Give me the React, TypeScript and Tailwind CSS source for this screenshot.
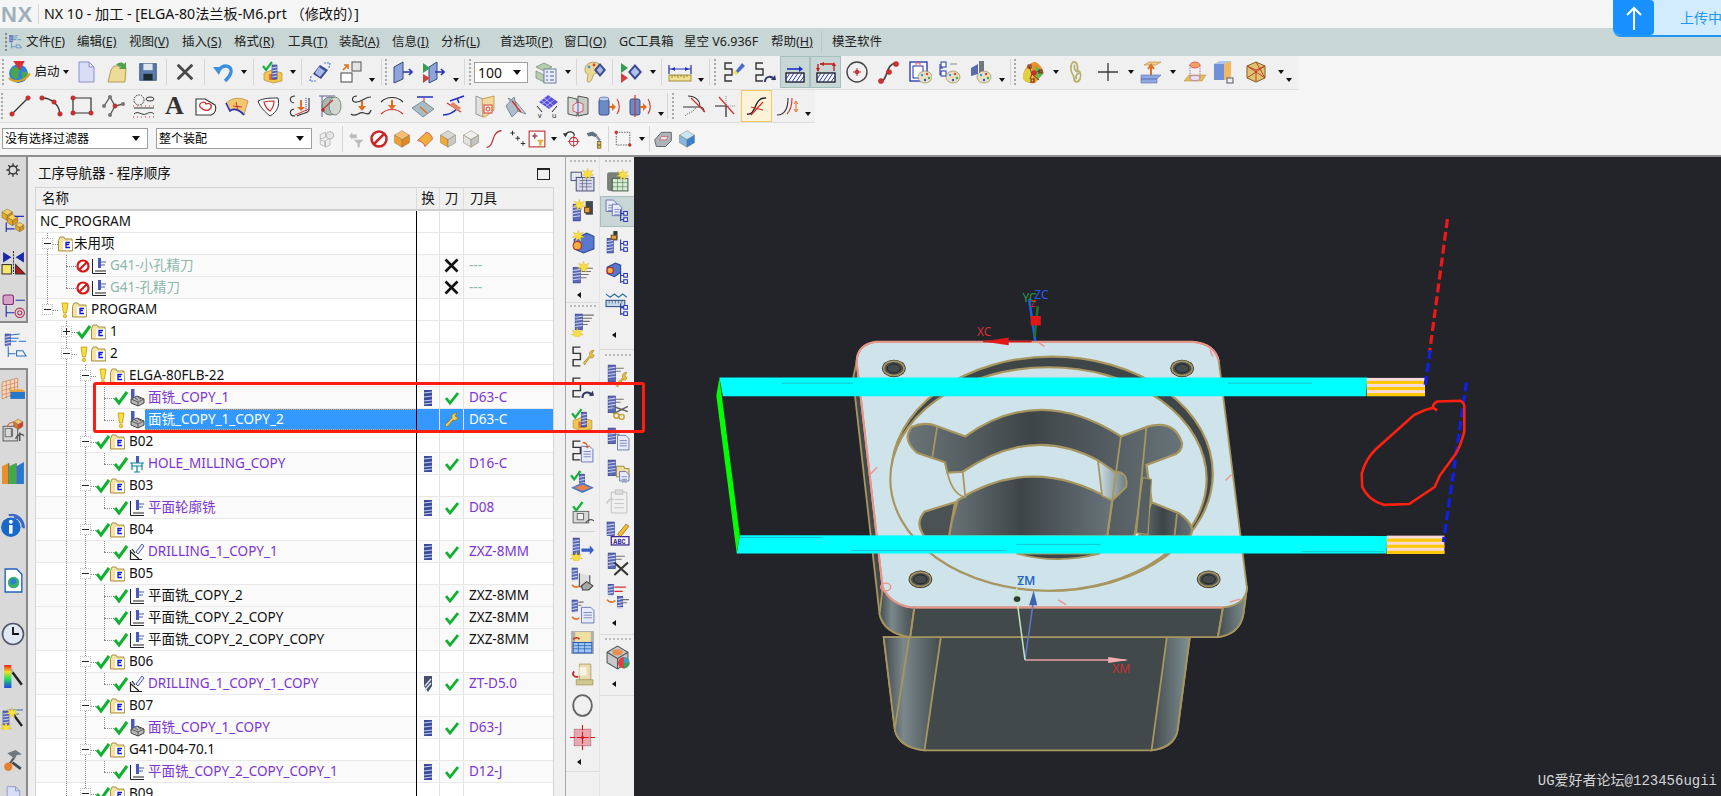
import React from "react";

const FONT = "font-['Noto_Sans','Noto_Sans_CJK_SC',sans-serif]";

// ---- small drawing helpers for the toolbar icons ----
const mill = (x: number, y: number, h = 16, w = 7) => (
  <g>
    <rect x={x} y={y} width={w} height={h} fill="#5a68b8" stroke="#2d3a85" strokeWidth=".6" />
    <path d={`M${x} ${y + 3}l${w} -1M${x} ${y + 6}l${w} -1M${x} ${y + 9}l${w} -1M${x} ${y + 12}l${w} -1`} stroke="#cdd4f2" strokeWidth="1" />
  </g>
);
const snake = <path d="M10 3H3v6h7v6H3v6h7" fill="none" stroke="#333" strokeWidth="1.4" />;
const palette = (x: number, y: number) => (
  <g>
    <ellipse cx={x} cy={y} rx="7" ry="6" fill="#eadfc0" stroke="#8a7a50" strokeWidth=".6" />
    <circle cx={x - 3} cy={y - 2} r="1.2" fill="#2aa0e0" />
    <circle cx={x + 2} cy={y - 3} r="1.2" fill="#e04030" />
    <circle cx={x + 4} cy={y + 1} r="1.2" fill="#30b040" />
    <circle cx={x} cy={y + 3} r="1.2" fill="#3050d0" />
  </g>
);
const redDot = (x: number, y: number, r = 1.9) => <circle cx={x} cy={y} r={r} fill="#d03030" stroke="#902020" strokeWidth=".4" />;
const greenCheck = (x: number, y: number) => (
  <path d={`M${x} ${y + 3}l3 4l6 -8`} fill="none" stroke="#18b040" strokeWidth="2.2" />
);
const treeMark = (x: number, y: number) => (
  <path d={`M${x} ${y}v11M${x} ${y + 4}h3M${x} ${y + 10}h3`} stroke="#2030b0" strokeWidth="1" fill="none" />
);
const treeBoxes = (x: number, y: number) => (
  <g fill="#fff" stroke="#2030b0" strokeWidth="1">
    {treeMark(x, y)}
    <rect x={x + 3} y={y + 2} width="3.5" height="3.5" />
    <rect x={x + 3} y={y + 8} width="3.5" height="3.5" />
  </g>
);
const doc = (x: number, y: number, w = 10, h = 13) => (
  <g>
    <path d={`M${x} ${y}h${w - 3}l3 3v${h - 3}h-${w}z`} fill="#e8ecfa" stroke="#5a68a8" strokeWidth=".8" />
    <path d={`M${x + 2} ${y + 5}h${w - 4}M${x + 2} ${y + 7.5}h${w - 4}M${x + 2} ${y + 10}h${w - 4}`} stroke="#5a68a8" strokeWidth=".7" />
  </g>
);
const cube = (x: number, y: number, s: number, top: string, left: string, right: string) => (
  <g stroke="#7a6a40" strokeWidth=".5">
    <path d={`M${x} ${y + s * 0.3}L${x + s / 2} ${y}L${x + s} ${y + s * 0.3}L${x + s / 2} ${y + s * 0.6}z`} fill={top} />
    <path d={`M${x} ${y + s * 0.3}L${x + s / 2} ${y + s * 0.6}V${y + s * 1.1}L${x} ${y + s * 0.8}z`} fill={left} />
    <path d={`M${x + s} ${y + s * 0.3}L${x + s / 2} ${y + s * 0.6}V${y + s * 1.1}L${x + s} ${y + s * 0.8}z`} fill={right} />
  </g>
);
const star = (x: number, y: number) => (
  <path d={`M${x} ${y - 5}l1.2 3.6l3.8 -1.4l-2 3l3 1.6l-3.8 .4l.4 3.8l-2.6 -3l-2.6 3l.4 -3.8l-3.8 -.4l3 -1.6l-2 -3l3.8 1.4z`} fill="#f8e040" stroke="#c8a020" strokeWidth=".3" />
);
const hatch = (
  <>
    <rect x="3" y="13" width="18" height="9" fill="#fff" stroke="#000" strokeWidth="1.2" />
    <path d="M5 22l6-9M9 22l6-9M13 22l6-9M17 22l4-6M3 19l4-6" stroke="#2030c0" strokeWidth="1" />
  </>
);

const ICONS: Record<string, React.ReactNode> = {
  earth: (
    <>
      <circle cx="11" cy="13" r="9" fill="#2f80d8" />
      <path d="M5 8c3-2 6-1 7 1s-2 3-1 6s-3 4-5 2s-3-6-1-9zM14 12c2-1 5-1 6 1c-1 3-3 5-5 5c-1-2 0-4-1-6z" fill="#48a848" />
      <path d="M2 17c5 6 16 3 20-4" fill="none" stroke="#d8a020" strokeWidth="2" />
      <path d="M6 1h11l-5 9z" fill="#d83030" />
    </>
  ),
  doc: <path d="M5 2h10l5 5v15H5zM15 2v5h5" fill="#d8def6" stroke="#8a90c8" strokeWidth="1" />,
  folder: (
    <>
      <path d="M5 10l3-4h5l1 2h6l-1 14H2z" fill="#ecdc98" stroke="#b09c58" />
      <path d="M10 5c3-3 6-3 8-1l2-2v7h-7l2-2c-1-1-3-1-5-2z" fill="#50a050" />
    </>
  ),
  save: (
    <>
      <rect x="3" y="3" width="18" height="18" fill="#5a7ca8" stroke="#3a5478" />
      <rect x="7" y="3" width="10" height="7" fill="#dfe6f0" />
      <rect x="7" y="14" width="10" height="7" fill="#1e2830" />
    </>
  ),
  xmark: <path d="M4 4l16 16M20 4L4 20" stroke="#484848" strokeWidth="3" />,
  undo: (
    <>
      <path d="M8 10c4-6 13-5 12 2c-1 5-4 7-6 9" fill="none" stroke="#3c8fe0" strokeWidth="3.4" />
      <path d="M2 7l9 0l-3 8z" fill="#3c8fe0" />
    </>
  ),
  camCheck: (
    <>
      <path d="M3 13l8-3l10 3v8l-9 2l-9-3z" fill="#f0c850" stroke="#b08020" strokeWidth=".6" />
      <path d="M8 14l7 0v6l-7 0z" fill="#e07040" />
      {mill(11, 5, 14, 5)}
      {greenCheck(2, 3)}
    </>
  ),
  mirror: (
    <>
      <path d="M12 5l8 5l-7 9l-8-5z" fill="#3a4a90" />
      <path d="M11 7l6 4l-5 6l-5-4z" fill="#a8b8e8" />
      <path d="M16 3l6 0l-1 5M8 21l-6 0l1-5" fill="none" stroke="#4878d8" strokeWidth="1.2" strokeDasharray="2 1" />
    </>
  ),
  squares: (
    <>
      <rect x="13" y="2" width="9" height="9" fill="#e4e4e4" stroke="#555" />
      <rect x="2" y="13" width="11" height="9" fill="#fff" stroke="#444" />
      <path d="M4 10l5-5M5 5h4v4" fill="none" stroke="#e07020" strokeWidth="1.6" />
    </>
  ),
  box1: (
    <>
      <path d="M4 7l9-5v17l-9 4z" fill="#8ea4da" stroke="#3a4a7a" />
      <path d="M13 12h9M19 9l3 3l-3 3" fill="none" stroke="#2030c0" strokeWidth="1.6" />
    </>
  ),
  box2: (
    <>
      <path d="M8 7l8-5v17l-8 4z" fill="#8ea4da" stroke="#3a4a7a" />
      <path d="M2 3l7 5l-7 5z" fill="#30a050" />
      <path d="M2 14l7 4l-7 5z" fill="#d04040" />
      <path d="M14 12h9M20 9l3 3l-3 3" fill="none" stroke="#2030c0" strokeWidth="1.6" />
    </>
  ),
  stack: (
    <>
      <path d="M2 7l8-4l8 4l-8 4zM2 11l8 4v7l-8-4z" fill="#b8ccb0" stroke="#708870" strokeWidth=".7" />
      <rect x="10" y="9" width="12" height="14" fill="#e8ecf8" stroke="#7080a0" />
      <path d="M12 12h2M16 12h4M12 16h2M16 16h4M12 20h2M16 20h4" stroke="#506090" strokeWidth="1.2" />
    </>
  ),
  paletteD: (
    <>
      <path d="M2 9c0-6 9-9 14-5l-2 9c-2 1-3 0-4 3c-1 4-3 7-5 6c-2-1 0-5 0-7c0-2-3 0-3-6z" fill="#ecd890" stroke="#a08850" strokeWidth=".7" />
      <circle cx="6" cy="7" r="1.4" fill="#2aa0e0" />
      <circle cx="11" cy="5" r="1.4" fill="#e04030" />
      <path d="M17 3l6 7l-6 7l-6-7z" fill="#3a4a90" />
      <path d="M17 6l3.4 4L17 14l-3.4-4z" fill="#a8b8e8" />
    </>
  ),
  flagD: (
    <>
      <path d="M2 3l7 5l-7 5z" fill="#30a050" />
      <path d="M2 13l7 5l-7 5z" fill="#d04040" />
      <path d="M16 4l7 8l-7 8l-7-8z" fill="#3a4a90" />
      <path d="M16 7l4.4 5l-4.4 5l-4.4-5z" fill="#b0c0ec" />
    </>
  ),
  ruler: (
    <>
      <path d="M1 5v9M23 5v9M1 9h22" stroke="#2030c0" strokeWidth="1.2" />
      <path d="M3 9l4-2v4zM21 9l-4-2v4z" fill="#2030c0" />
      <rect x="1" y="15" width="22" height="6" fill="#f0e090" stroke="#a09040" />
      <path d="M4 15v3M7 15v2M10 15v3M13 15v2M16 15v3M19 15v2" stroke="#706020" strokeWidth=".7" />
    </>
  ),
  snakeL: (
    <>
      {snake}
      <path d="M13 12l7-9l3 3l-8 8z" fill="#4a6ac8" />
      <path d="M13 10l3 3l-2 2l-3-2z" fill="#f0e060" />
    </>
  ),
  snakeC: (
    <>
      {snake}
      <path d="M12 22c0-6 7-7 9-2" fill="none" stroke="#303868" strokeWidth="2" />
      <path d="M18 20h5l-1-5z" fill="#303868" />
    </>
  ),
  activeA: (
    <>
      <path d="M4 9h14" stroke="#2030c0" strokeWidth="1.6" />
      <path d="M20 9l-4-3v6z" fill="#2030c0" />
      {hatch}
    </>
  ),
  activeB: (
    <>
      <path d="M6 4h14M4 4v7M20 4v7" stroke="#c02020" strokeWidth="1.4" />
      <path d="M4 12l-2-4h4zM20 2l2 4h-4zM6 4l4-2v4z" fill="#c02020" />
      {hatch}
    </>
  ),
  circlePt: (
    <>
      <circle cx="12" cy="12" r="10" fill="none" stroke="#444" strokeWidth="1.4" />
      <path d="M12 8v8M8 12h8" stroke="#d03030" strokeWidth="1" />
      {redDot(12, 12, 2)}
    </>
  ),
  sCurve: (
    <>
      <path d="M4 21c7 0 4-17 15-18" fill="none" stroke="#444" strokeWidth="1.6" />
      {redDot(4, 21, 2.6)}
      {redDot(12, 12, 2.6)}
      {redDot(19, 4, 2.6)}
    </>
  ),
  sqPalette: (
    <>
      <rect x="2" y="2" width="17" height="19" fill="#fff" stroke="#2030b0" strokeWidth="1.3" />
      <rect x="5" y="6" width="10" height="12" fill="none" stroke="#2030b0" />
      <path d="M8 6V3h4v3" fill="none" stroke="#e06050" />
      {palette(17, 17)}
    </>
  ),
  treePalette: (
    <>
      {treeMark(3, 4)}
      <rect x="4" y="2" width="5" height="5" fill="#fff" stroke="#2030b0" />
      <rect x="4" y="11" width="5" height="5" fill="#fff" stroke="#2030b0" />
      <path d="M13 4h7" stroke="#888" />
      {palette(16, 17)}
    </>
  ),
  millPalette: (
    <>
      <path d="M3 8l7-4l0 10l-7 2z" fill="#5a6ab0" />
      <rect x="11" y="1" width="5" height="12" fill="#707880" />
      {palette(16, 17)}
    </>
  ),
  rainbow: (
    <>
      <path d="M2 17C2 9 9 2 14 2c5 1 8 8 9 11l-9 10c-5 1-12-1-12-6z" fill="#e89030" />
      <path d="M2 17c0-5 4-9 7-12c2 5 4 10 3 17c-5 1-10-1-10-5z" fill="#e0d040" />
      <path d="M14 6c4 2 7 5 8 8l-6 6c0-5-1-10-2-14z" fill="#50c050" />
      <path d="M8 6l3 8l-2 5M11 14l7-3l2 1M11 14l7 6" fill="none" stroke="#803030" />
      <rect x="7" y="5" width="3" height="3" fill="none" stroke="#702020" />
      <rect x="18" y="10" width="3" height="3" fill="none" stroke="#702020" />
      <rect x="10" y="19" width="3" height="3" fill="none" stroke="#702020" />
      {redDot(13, 13, 2.4)}
    </>
  ),
  chain: <path d="M9 2c4 0 4 7 3 10c2-3 5 2 3 7c-2 4-6 4-6-1c0-4-4-5-3-10c0-3 1-6 3-6zM10 5c-2 2 0 6 2 7M14 13c-3 1-4 5-2 6" fill="none" stroke="#b8b070" strokeWidth="1.8" />,
  plus: <path d="M12 3v18M2 12h20" stroke="#383838" strokeWidth="1.3" />,
  lift: (
    <>
      <path d="M5 5l5-3h12l-5 3z" fill="#f0c880" stroke="#b08840" strokeWidth=".6" />
      <path d="M12 6v9M9 9l3-4l3 4" fill="none" stroke="#e07020" strokeWidth="2" />
      <path d="M2 15h20l-4 4H2zM2 19h16v4H2z" fill="#90a8e0" stroke="#5870b0" strokeWidth=".6" />
    </>
  ),
  cylPlate: (
    <>
      <path d="M1 21l5-6h17l-4 6z" fill="#e8c050" stroke="#a88830" strokeWidth=".5" />
      <path d="M7 5v13c0 2 10 2 10 0V5" fill="none" stroke="#b070c0" strokeDasharray="1.5 1" />
      <ellipse cx="12" cy="5" rx="5" ry="3" fill="#f0a060" stroke="#d04040" strokeWidth=".7" />
      <ellipse cx="12" cy="18" rx="5" ry="2.5" fill="#e8e0f0" stroke="#b070c0" strokeWidth=".7" />
    </>
  ),
  blueBox: (
    <>
      <path d="M3 4l6-3h11v16l-6 3H3z" fill="#f0b860" />
      <path d="M3 4h10v16H3z" fill="#7090d8" />
      <path d="M3 4l6-3h11l-7 3z" fill="#b0c8f0" />
      <rect x="16" y="18" width="6" height="5" fill="#f0f0f0" stroke="#556" />
    </>
  ),
  wireBox: (
    <>
      <path d="M3 6l9-4l9 4v12l-9 4l-9-4z" fill="#e0c470" stroke="#806020" />
      <path d="M3 6l9 4l9-4M12 10v12M3 6l18 12M21 6L3 18M12 2l9 16" fill="none" stroke="#c04030" strokeWidth="1" />
    </>
  ),
  line: (
    <>
      <path d="M4 20L20 4" stroke="#333" strokeWidth="1.2" />
      {redDot(4, 20, 2.3)}
      {redDot(20, 4, 2.3)}
    </>
  ),
  arc: (
    <>
      <path d="M3 4c9 0 18 6 18 18" fill="none" stroke="#333" strokeWidth="1.4" />
      {redDot(3, 4, 2.3)}
      {redDot(15, 8, 2.3)}
      {redDot(21, 20, 2.3)}
    </>
  ),
  rect: (
    <>
      <path d="M3 4h18v15H3z" fill="none" stroke="#333" strokeWidth="1.2" />
      {redDot(3, 4, 2.3)}
      {redDot(3, 19, 2.3)}
      {redDot(21, 19, 2.3)}
    </>
  ),
  poly: (
    <>
      <path d="M3 12L9 3l5 9l-5 9l5-9l8-2" fill="none" stroke="#555" strokeWidth="1.3" />
      <circle cx="9" cy="3" r="2" fill="#777" />
      <circle cx="3" cy="12" r="2" fill="#777" />
      {redDot(14, 12, 2.2)}
      <circle cx="9" cy="21" r="2" fill="#777" />
      <circle cx="22" cy="10" r="2" fill="#777" />
    </>
  ),
  sketchDots: (
    <>
      <circle cx="7" cy="6" r="5" fill="none" stroke="#333" strokeDasharray="1.5 1" />
      <ellipse cx="18" cy="5" rx="4" ry="2" fill="none" stroke="#333" />
      <path d="M2 14h20M2 20c4-4 8 2 12 0s6-2 8 0" fill="none" stroke="#333" />
      <path d="M1 12h22M1 23h22" stroke="#d03030" strokeDasharray="1 3" />
    </>
  ),
  heart: (
    <>
      <path d="M2 5h9l10 6c2 4 0 9-4 10H2z" fill="#fff" stroke="#333" strokeWidth="1.1" />
      <path d="M6 13c-2-5 5-6 6-3c4-2 7 2 4 5c-2 2-6 2-10-2z" fill="none" stroke="#d03030" strokeWidth="1.3" />
    </>
  ),
  patch: (
    <>
      <path d="M1 9c7-6 14-6 22-2l-4 14C14 15 8 14 5 17z" fill="#f0c870" stroke="#c08030" strokeWidth=".7" />
      <path d="M1 9l4 8c3-3 9-2 14 4" fill="none" stroke="#2030c0" strokeWidth="1.6" />
      <path d="M11 8l2 9M8 12l9 1" stroke="#d03030" strokeWidth="1" />
    </>
  ),
  patch2: (
    <>
      <path d="M2 7c6-3 13-3 20-3c2 8-1 14-8 18C9 18 4 13 2 7z" fill="#fff" stroke="#333" />
      <path d="M8 8c4-1 8-1 10-1c0 5-2 8-4 10C11 15 9 12 8 8z" fill="none" stroke="#d03030" strokeWidth="1.2" />
    </>
  ),
  curve1: (
    <>
      <path d="M8 2C2 2 2 8 7 9M8 22C2 22 2 16 7 15M22 4v12c0 3-6 3-12 6" fill="none" stroke="#333" strokeWidth="1.1" />
      <path d="M14 6v9" stroke="#e07020" strokeWidth="2" />
      <path d="M10 13h8l-4 4z" fill="#e07020" />
      <path d="M19 4v13" stroke="#2030c0" strokeDasharray="1 1" />
      <path d="M8 21l14-6" stroke="#d03030" />
    </>
  ),
  cylLine: (
    <>
      <path d="M1 2h16M4 2v21" stroke="#606090" />
      <ellipse cx="12" cy="12" rx="8" ry="9" fill="#a8b8b0" stroke="#6a7a70" />
      <ellipse cx="17" cy="12" rx="6" ry="9" fill="#d0d8d0" stroke="#7a8a80" />
      <path d="M4 16L15 6" stroke="#d03030" strokeWidth="1.2" />
      {redDot(5, 16, 1.5)}
    </>
  ),
  curves: (
    <>
      <path d="M8 2C2 2 2 9 8 8M22 3c-6 0-8 4-14 5M2 20c5 4 8-3 13-1s6 0 7-3" fill="none" stroke="#333" strokeWidth="1.2" />
      <path d="M13 7v7" stroke="#e07020" strokeWidth="2" />
      <path d="M9 12h8l-4 5z" fill="#e07020" />
    </>
  ),
  arch: (
    <>
      <path d="M1 8c6-6 16-6 22 0" fill="none" stroke="#333" strokeWidth="1.1" />
      <path d="M1 20c6-6 16-6 22 0" fill="none" stroke="#d03030" strokeWidth="1.2" />
      <path d="M12 6v7" stroke="#e07020" strokeWidth="2" />
      <path d="M8 11h8l-4 5z" fill="#e07020" />
    </>
  ),
  plane: (
    <>
      <path d="M6 3h16" stroke="#2030c0" strokeWidth="1.5" />
      <path d="M13 3v9" stroke="#d03030" />
      <path d="M1 14l11-7l11 8l-11 8z" fill="#a8bcc4" stroke="#607080" strokeWidth=".7" />
      <path d="M9 13l7 6" stroke="#e07020" strokeWidth="1.6" />
    </>
  ),
  crossBlue: (
    <>
      <path d="M8 7L22 2M15 4l2 5" stroke="#2030c0" strokeWidth="1.5" />
      <path d="M1 21c6 0 11-3 15-7" fill="none" stroke="#2030c0" strokeWidth="1.5" />
      <path d="M5 9l14 9" stroke="#d03030" strokeWidth="1.2" />
      <path d="M11 8l8 6l-3 3l-8-6z" fill="#e08860" />
    </>
  ),
  sheets: (
    <>
      <path d="M3 2l7 3v18l-7-3z" fill="#e0e0e0" stroke="#999" />
      <path d="M9 5l12-3v14l-9 7l-2 0z" fill="#f0d8a0" stroke="#c8a050" />
      <rect x="11" y="11" width="8" height="8" fill="#f4ecd8" stroke="#d04040" />
      <circle cx="15" cy="15" r="2" fill="none" stroke="#d04040" />
    </>
  ),
  fold: (
    <>
      <path d="M4 4l8 4l10 12l-8-3z" fill="#cfd8de" stroke="#7a8a98" />
      <path d="M2 12l8-9l4 14l-6 6z" fill="#b0bcc8" stroke="#7a8a98" />
      <path d="M8 7l9 11" stroke="#d03030" strokeWidth="1.3" />
    </>
  ),
  mesh: (
    <>
      <path d="M4 8l9-7l10 7l-9 7z" fill="#5a50d8" />
      <path d="M6 6l10 8M9 4l10 8M13 1l-9 7M16 3l-9 7M19 6l-9 7" stroke="#cfd0f8" strokeWidth=".7" />
      <path d="M2 12l5 6M22 12l-5 6" stroke="#222" />
      <text x="3" y="24" fontSize="7" fill="#222">v</text>
      <text x="17" y="24" fontSize="7" fill="#222">u</text>
    </>
  ),
  cubeSheets: (
    <>
      <path d="M2 3l9 2v17l-9-2z" fill="#d8dcd8" stroke="#555" />
      <path d="M12 2l10 2v16l-10 2z" fill="#c8ccc8" stroke="#555" />
      <path d="M7 11l5-3l5 2v7l-5 2l-5-2z" fill="#e8e0e8" stroke="#d04040" strokeWidth=".8" />
      <path d="M12 8v11" stroke="#2040c0" strokeWidth=".8" />
    </>
  ),
  cylA: (
    <>
      <rect x="2" y="5" width="10" height="16" rx="2" fill="#6a8ac8" stroke="#3a5090" />
      <ellipse cx="7" cy="5" rx="5" ry="2" fill="#c0d0ec" stroke="#3a5090" strokeWidth=".6" />
      <path d="M12 13h5" stroke="#e07020" strokeWidth="2" />
      <path d="M15 9l4 4l-4 4z" fill="#e07020" />
      <path d="M20 5c3 4 3 11 0 15" fill="none" stroke="#d03030" strokeWidth="1.1" />
    </>
  ),
  cylB: (
    <>
      <rect x="2" y="5" width="10" height="16" rx="2" fill="#6a8ac8" stroke="#3a5090" />
      <path d="M7 1v22" stroke="#d03030" strokeWidth="1.2" />
      <path d="M12 13h5" stroke="#e07020" strokeWidth="2" />
      <path d="M15 9l4 4l-4 4z" fill="#e07020" />
      <path d="M20 5c3 4 3 11 0 15" fill="none" stroke="#d03030" strokeWidth="1.1" />
    </>
  ),
  trim1: (
    <>
      <path d="M1 13h17c4 0 4 3 4 5" fill="none" stroke="#333" strokeWidth="1.1" />
      <path d="M6 2c7 0 12 4 12 11" fill="none" stroke="#333" strokeWidth="1.1" />
      <path d="M3 22c2-3 6-3 8-5s3-3 3-4" fill="none" stroke="#777" strokeDasharray="1.4 1" />
      <path d="M9 4l14 14" stroke="#d03030" strokeWidth="1.3" />
    </>
  ),
  trim2: (
    <>
      <path d="M1 12h12M12 12v11" stroke="#222" strokeWidth="1.2" />
      <path d="M12 2v10M12 12h9" stroke="#888" strokeDasharray="1 1" />
      <path d="M5 3l15 17" stroke="#d03030" strokeWidth="1.2" />
    </>
  ),
  trim3: (
    <>
      <path d="M2 20c10 2 6-17 19-16" fill="none" stroke="#222" strokeWidth="1.4" />
      <path d="M6 21L18 8M6 13l12 3" stroke="#d03030" strokeWidth="1.2" />
    </>
  ),
  trim4: (
    <>
      <path d="M2 21c7 0 11-6 11-17" fill="none" stroke="#333" strokeWidth="1.1" />
      <path d="M12 20c4-4 5-10 5-16" fill="none" stroke="#d03030" strokeWidth="1.1" />
      <path d="M21 8v9M19 10l2-3l2 3M19 15l2 3l2-3" fill="none" stroke="#e07020" strokeWidth="1" />
    </>
  ),
  grayCube: (
    <>
      <path d="M3 6l7-3v7l-7 2zM10 14l6-3v9l-6 3zM3 13l6 2v7l-6-3z" fill="#eee" stroke="#aaa" />
      <circle cx="16" cy="7" r="5" fill="#e4e4e4" stroke="#aaa" />
    </>
  ),
  grayFilter: (
    <>
      <path d="M3 8l4-5v3h6v5H7v2z" fill="#bbb" />
      <path d="M9 13h13l-5 5v5h-3v-5z" fill="#bbb" />
    </>
  ),
  no: (
    <>
      <circle cx="12" cy="12" r="9" fill="#fff" stroke="#c82828" strokeWidth="3" />
      <path d="M6 18L18 6" stroke="#c82828" strokeWidth="3" />
    </>
  ),
  orangeCube: cube(3, 2, 18, "#f8c070", "#f0a030", "#e08828"),
  orangePatch: <path d="M2 14L14 3c4 1 7 4 8 9L12 22c-1-4-5-7-10-8z" fill="#f0b040" stroke="#d03030" strokeWidth="1" />,
  cubeA: cube(3, 2, 18, "#d8d8d8", "#f0a840", "#c8c8c8"),
  cubeB: cube(3, 2, 18, "#f0f0f0", "#e0e0e0", "#c4c4c4"),
  sRed: <path d="M3 22c10 0 5-19 18-20" fill="none" stroke="#b83030" strokeWidth="1.4" />,
  plusses: <path d="M3 4h6M6 1v6M10 11h6M13 8v6M17 18h6M20 15v6" stroke="#222" strokeWidth="1.2" />,
  filterBox: (
    <>
      <rect x="1.5" y="1.5" width="21" height="21" fill="#fff" stroke="#b82828" strokeWidth="1.4" />
      <path d="M5 8h8M9 4v8" stroke="#333" />
      <circle cx="9" cy="8" r="2" fill="none" stroke="#d03030" />
      <path d="M12 13h9l-3 4v4h-3v-4z" fill="#e8b030" />
    </>
  ),
  undoT: (
    <>
      <path d="M4 8c2-6 10-6 11 0" fill="none" stroke="#333" strokeWidth="1.6" />
      <path d="M1 5l6 0l-3 5z" fill="#333" />
      <circle cx="14" cy="15" r="5" fill="none" stroke="#c02828" strokeWidth="1.3" />
      <path d="M14 8v14M7 15h14" stroke="#c02828" />
    </>
  ),
  toolsG: (
    <>
      <path d="M2 5l7-2l6 4l-2 3l-5-2l-4 1z" fill="#607080" />
      <path d="M15 8l4 5l-2 2l-4-5z" fill="#8090a0" />
      <rect x="15" y="15" width="4" height="4" fill="#e8c060" stroke="#806020" />
      <rect x="15" y="20" width="4" height="3" fill="#e8c060" stroke="#806020" />
    </>
  ),
  dashRect: (
    <>
      <path d="M3 3h18v17H3z" fill="none" stroke="#333" strokeDasharray="2 1.5" />
      {redDot(3, 3, 2)}
      {redDot(21, 20, 2)}
    </>
  ),
  grayBox: (
    <>
      <path d="M2 13L10 4h12v10l-7 7H4z" fill="#aeb4bc" stroke="#555" />
      <path d="M10 9h8l-2 4H8z" fill="#e8e8f0" stroke="#d04040" strokeWidth=".7" />
    </>
  ),
  blueCube: cube(3, 2, 18, "#c8e4f8", "#80b8e8", "#3880d0"),
  gear: (
    <>
      <circle cx="12" cy="12" r="6" fill="none" stroke="#333" strokeWidth="2" />
      <path d="M12 2v4M12 18v4M2 12h4M18 12h4M5 5l3 3M19 5l-3 3M5 19l3-3M19 19l-3-3" stroke="#333" strokeWidth="2" />
    </>
  ),
  asm: (
    <>
      {cube(1, 1, 10, "#f8d060", "#e8a820", "#d89018")}
      {cube(6, 6, 10, "#f8d060", "#e8a820", "#d89018")}
      <path d="M13 8h9M5 14v9M5 20h8" stroke="#2030b0" strokeWidth="1.1" />
      {cube(14, 14, 8, "#f8d060", "#e8a820", "#d89018")}
    </>
  ),
  mirrorT: (
    <>
      <path d="M2 2l8 5l-8 5zM22 2l-8 5l8 5z" fill="#1828b0" />
      <path d="M12 1v22" stroke="#333" strokeDasharray="2 1" />
      <rect x="1" y="14" width="9" height="9" fill="#f8e868" stroke="#333" />
      <path d="M14 23V14l9 9z" fill="#b81818" stroke="#333" />
    </>
  ),
  cylT: (
    <>
      <rect x="2" y="2" width="10" height="9" rx="2" fill="#d8a0c8" stroke="#803070" />
      <path d="M14 7h9M5 12v11M5 19h8" stroke="#2030b0" strokeWidth="1.1" />
      <circle cx="18" cy="19" r="4.5" fill="none" stroke="#b03060" />
      <circle cx="18" cy="19" r="2" fill="none" stroke="#b03060" />
    </>
  ),
  millT: (
    <>
      {mill(3, 1, 11, 5)}
      <path d="M8 2l9-1M8 5h8M8 8h6M16 8h7M6 13v10M6 20h7" stroke="#2a70c0" strokeWidth="1" />
      <path d="M14 17h6l3 5h-9z" fill="none" stroke="#2a70c0" />
    </>
  ),
  table: (
    <>
      <path d="M1 6l15-4v14L1 22z" fill="#f8d8b8" stroke="#b07840" strokeWidth=".6" />
      <path d="M1 10l15-4M1 14l15-4M1 18l15-4M5 5v16M9 4v16M13 3v15" stroke="#c87060" strokeWidth=".6" />
      <path d="M9 15h14v7H9z" fill="#2878c8" />
      <path d="M7 13h14l2 2H9z" fill="#f0a030" />
    </>
  ),
  cam: (
    <>
      <rect x="2" y="8" width="14" height="14" fill="#d8d8d8" stroke="#606060" />
      <path d="M4 10h6v8H4zM11 10v8" fill="none" stroke="#707070" />
      <path d="M14 20c2-4 5-6 8-3M18 14v8" fill="none" stroke="#555" strokeWidth="1.4" />
      {cube(12, 1, 9, "#f8c070", "#e07030", "#d04030")}
      <path d="M6 8c1-3 3-4 6-4" fill="none" stroke="#e06030" />
    </>
  ),
  books: (
    <>
      <path d="M1 6l6-3v20H1z" fill="#e89028" />
      <path d="M8 6l6-3v20H8z" fill="#38b040" />
      <path d="M15 6l7-4v21h-7z" fill="#2878d0" />
      <path d="M7 3h1v20H7zM14 3h1v20h-1z" fill="#555" />
    </>
  ),
  info: (
    <>
      <circle cx="10" cy="14" r="9" fill="#1868c8" />
      <circle cx="10" cy="9" r="1.8" fill="#fff" />
      <rect x="8.4" y="12" width="3.2" height="8" fill="#fff" />
      <path d="M8 3c8-2 14 4 14 12M13 5c5 0 8 4 8 9" fill="none" stroke="#3868c8" strokeWidth="2" />
    </>
  ),
  docEarth: (
    <>
      <path d="M4 1h11l5 5v17H4z" fill="#fff" stroke="#2060c0" strokeWidth="1.3" />
      <circle cx="12" cy="14" r="5.5" fill="#38b070" />
      <path d="M9 11c3-2 6 0 6 2s-4 4-6 2" fill="#3080c8" />
    </>
  ),
  clock: (
    <>
      <circle cx="12" cy="12" r="10.5" fill="#e0e8f4" stroke="#505868" strokeWidth="1.6" />
      <path d="M12 5v7h6" fill="none" stroke="#111" strokeWidth="1.8" />
    </>
  ),
  rainbowT: (
    <>
      <defs>
        <linearGradient id="rb" x1="0" y1="0" x2="0" y2="1">
          <stop offset="0" stopColor="#f02020" />
          <stop offset=".3" stopColor="#f0e020" />
          <stop offset=".6" stopColor="#20e060" />
          <stop offset="1" stopColor="#2040f0" />
        </linearGradient>
      </defs>
      <rect x="3" y="1" width="7" height="22" fill="url(#rb)" />
      <path d="M11 8l9 12" stroke="#222" strokeWidth="2.4" />
      <path d="M10 5l1 3" stroke="#aaa" strokeWidth="2" />
    </>
  ),
  wand: (
    <>
      {mill(2, 5, 15, 6)}
      <path d="M8 4h14M8 8h10" stroke="#2a70c0" />
      <path d="M12 8l9 12" stroke="#222" strokeWidth="2.4" />
      {star(11, 6)}
      {star(5, 21)}
    </>
  ),
  toolsT: (
    <>
      <path d="M6 5l8-3l6 4l-5 1l-2 4l-3-3z" fill="#707880" />
      <path d="M12 10l-5 7" stroke="#505860" strokeWidth="2" />
      <circle cx="7" cy="18" r="4" fill="#e88030" />
      <path d="M11 14l8 6" stroke="#404850" strokeWidth="2.6" />
    </>
  ),
  tableStar: (
    <>
      <rect x="1" y="5" width="10" height="8" fill="#e4e8f4" stroke="#505878" />
      <rect x="6" y="10" width="17" height="13" fill="#d8dcec" stroke="#505878" />
      <path d="M9 13h12M9 16h12M9 19h12M12 10v13M16 10v13" stroke="#505878" strokeWidth=".6" />
      {star(17, 6)}
    </>
  ),
  millStar: (
    <>
      {mill(3, 6, 16, 7)}
      <rect x="15" y="3" width="7" height="13" fill="#404850" />
      <rect x="14" y="9" width="5" height="5" fill="#e0a040" stroke="#704818" />
      {star(9, 6)}
    </>
  ),
  cubeStar: (
    <>
      <path d="M4 10l12-6l7 3v12l-10 4l-9-4z" fill="#5878d0" stroke="#304890" />
      <circle cx="7" cy="16" r="4" fill="#f0b040" stroke="#c02020" />
      {star(8, 6)}
    </>
  ),
  millStar2: (
    <>
      {mill(3, 7, 15, 7)}
      <path d="M10 8h12M10 11h10M10 14h8M10 17h6" stroke="#707070" />
      {star(13, 6)}
    </>
  ),
  millSpark: (
    <>
      {mill(5, 2, 15, 7)}
      <path d="M12 3h11M12 6h9M12 9h7M12 12h5" stroke="#707070" />
      {star(7, 20)}
    </>
  ),
  snakeW: (
    <>
      {snake}
      <path d="M13 18l6-7c-1-3 1-5 4-5l-2 3l2 2c0 2-2 3-4 2l-5 7z" fill="#e8c040" stroke="#987818" strokeWidth=".6" />
    </>
  ),
  checkPlate: (
    <>
      {mill(9, 4, 13, 5)}
      <path d="M1 17l11-5l11 5l-11 5z" fill="#4878c8" />
      <path d="M4 17l8-3l8 3l-8 3z" fill="#e88050" />
      {greenCheck(1, 2)}
    </>
  ),
  checkMach: (
    <>
      <rect x="3" y="10" width="15" height="11" fill="#d8d8d8" stroke="#707070" />
      <path d="M7 12h6v6H7z" fill="#f0f0f0" stroke="#707070" />
      <path d="M15 21c2-3 5-4 8-2" fill="none" stroke="#555" />
      {greenCheck(3, 2)}
    </>
  ),
  snakeD: (
    <>
      {snake}
      {doc(11, 8, 11, 15)}
      <path d="M12 4c3-1 5 1 5 4l2-1l-2 3l-3-2h2c0-2-2-3-4-3z" fill="#e06030" />
    </>
  ),
  millArrow: (
    <>
      {mill(3, 2, 16, 6)}
      {star(6, 20)}
      <path d="M11 12h8v-3l4 4.5l-4 4.5v-3h-8z" fill="#3a60c8" />
    </>
  ),
  millMach: (
    <>
      {mill(2, 1, 11, 5)}
      <path d="M9 6v13h10V8" fill="#ddd" stroke="#444" />
      <path d="M11 18l5-4l6 4l-4 4h-6z" fill="#a8a8a8" stroke="#444" />
      <path d="M2 17c2 3 5 3 7 1" fill="none" stroke="#e07020" strokeWidth="1.6" />
    </>
  ),
  millDoc: (
    <>
      {mill(2, 1, 11, 5)}
      {doc(11, 8, 12, 15)}
      <path d="M8 3h5M8 6h3" stroke="#707070" />
      <path d="M2 17c2 3 5 3 7 1" fill="none" stroke="#e07020" strokeWidth="1.6" />
    </>
  ),
  machTable: (
    <>
      <rect x="1" y="1" width="22" height="22" fill="#b0b0b0" />
      <rect x="5" y="2" width="15" height="12" fill="#f0e0a0" />
      <rect x="3" y="12" width="18" height="10" fill="#a0c8f0" stroke="#2a58c0" />
      <path d="M3 15h18M3 18h18M8 12v10M14 12v10" stroke="#2a58c0" strokeWidth=".7" />
      <path d="M3 9c2-2 5-2 6 0" fill="none" stroke="#c82828" strokeWidth="1.5" />
    </>
  ),
  machArrow: (
    <>
      <path d="M9 2h11v17H9z" fill="#e8dcb0" stroke="#a09050" strokeWidth=".7" />
      <path d="M6 17h16v5H6z" fill="#d0c890" stroke="#a09050" strokeWidth=".7" />
      <path d="M9 5h7v8H9z" fill="#f8f4e0" />
      <path d="M4 9c-3 3 0 6 4 5" fill="none" stroke="#d02020" strokeWidth="1.6" />
    </>
  ),
  ring: <ellipse cx="12" cy="12" rx="9" ry="10" fill="none" stroke="#666" strokeWidth="1.8" />,
  target: (
    <>
      <rect x="4" y="4" width="16" height="16" fill="#e8a8b0" stroke="#b06070" strokeWidth=".6" />
      <path d="M12 0v24M0 12h24" stroke="#d01818" strokeDasharray="5 1.5" />
      <circle cx="12" cy="12" r="1.5" fill="#d01818" />
    </>
  ),
  cardStar: (
    <>
      <rect x="2" y="4" width="15" height="18" rx="2" fill="#788078" />
      <rect x="7" y="10" width="15" height="12" fill="#d8ecd8" stroke="#506050" />
      <path d="M7 14h15M7 18h15M12 10v12M17 10v12" stroke="#508050" strokeWidth=".6" />
      {star(17, 6)}
    </>
  ),
  docsTree: (
    <>
      {doc(1, 1, 10, 11)}
      {doc(7, 5, 9, 11)}
      {treeBoxes(15, 10)}
    </>
  ),
  millTree: (
    <>
      {mill(2, 8, 14, 6)}
      <rect x="8" y="1" width="4" height="9" fill="#303840" />
      <rect x="6" y="5" width="5" height="4" fill="#e8a040" stroke="#705018" />
      {treeBoxes(15, 9)}
    </>
  ),
  cubeTree: (
    <>
      <path d="M2 6l8-4l5 2v7l-6 4l-7-3z" fill="#5878d0" stroke="#304890" />
      <circle cx="5" cy="9" r="3" fill="#f0b040" stroke="#c02020" />
      {treeBoxes(15, 10)}
    </>
  ),
  waveTree: (
    <>
      <path d="M1 2l4 3l4-3l4 3l4-3l4 3" fill="none" stroke="#2a70a0" strokeWidth="1.1" />
      <rect x="1" y="8" width="18" height="6" fill="#c8d8e8" stroke="#2a5080" />
      <path d="M4 8v3M7 8v3M10 8v3M13 8v3M16 8v3" stroke="#2a5080" strokeWidth=".6" />
      {treeBoxes(15, 11)}
    </>
  ),
  millW: (
    <>
      {mill(3, 2, 16, 7)}
      <path d="M10 5h8M10 8h5" stroke="#707070" />
      <path d="M10 21l7-7c-1-3 1-5 4-5l-2 3l2 2c0 2-2 3-4 2l-5 7z" fill="#e8c040" stroke="#987818" strokeWidth=".6" />
    </>
  ),
  millS: (
    <>
      {mill(3, 1, 16, 7)}
      <path d="M10 4h8M10 7h5" stroke="#707070" />
      <path d="M8 11l14 5M8 18l14-7" stroke="#606060" strokeWidth="1.4" />
      <circle cx="11" cy="20" r="2.4" fill="none" stroke="#c8a030" strokeWidth="1.4" />
      <circle cx="16" cy="21" r="2.4" fill="none" stroke="#c8a030" strokeWidth="1.4" />
    </>
  ),
  millD2: (
    <>
      {mill(3, 2, 15, 7)}
      <path d="M10 5h6M10 8h4" stroke="#707070" />
      {doc(12, 9, 11, 14)}
    </>
  ),
  millF: (
    <>
      {mill(3, 2, 15, 7)}
      <path d="M11 8h7l1 2h4v8H11z" fill="#f0dca0" stroke="#a09050" />
      {doc(14, 13, 9, 9)}
    </>
  ),
  clip: (
    <>
      <rect x="6" y="3" width="15" height="20" rx="1" fill="#f0f0f0" stroke="#c4c4c4" />
      <rect x="10" y="1" width="7" height="4" fill="#ddd" stroke="#c4c4c4" />
      <path d="M9 10h9M9 14h9M9 18h9" stroke="#c8c8c8" />
      <path d="M2 14c1-4 4-5 6-4" fill="none" stroke="#c8c8c8" strokeWidth="1.6" />
    </>
  ),
  millABC: (
    <>
      {mill(2, 1, 13, 7)}
      <path d="M12 13l8-10l3 2l-8 10z" fill="#f0c030" stroke="#805018" strokeWidth=".6" />
      <rect x="6" y="15" width="17" height="8" fill="#f4f0fc" stroke="#382890" strokeWidth="1.2" />
      <text x="8" y="22" fontSize="6.5" fontWeight="700" fill="#382890" fontFamily="Liberation Mono">ABC</text>
    </>
  ),
  millX: (
    <>
      {mill(3, 1, 15, 7)}
      <path d="M10 4h9M10 7h6" stroke="#707070" />
      <path d="M9 10l13 12M22 10L9 22" stroke="#333" strokeWidth="2" />
    </>
  ),
  swap: (
    <>
      {mill(3, 0, 10, 5)}
      {mill(12, 12, 10, 5)}
      <path d="M9 3h11M9 7h8" stroke="#d03030" strokeWidth="1.2" />
      <path d="M17 15h6M17 18h4" stroke="#707070" />
      <path d="M2 15c2 3 5 3 8 1" fill="none" stroke="#e07020" strokeWidth="1.6" />
    </>
  ),
  cubePie: (
    <>
      <path d="M2 7l10-6l10 6v10l-10 6l-10-6z" fill="#c8c8c8" stroke="#555" />
      <path d="M2 7l10 6l10-6M12 13v10" fill="none" stroke="#555" />
      <ellipse cx="12" cy="7" rx="5" ry="3" fill="#e89050" />
      <circle cx="18" cy="17" r="5.5" fill="#e04040" />
      <path d="M18 17v5.5a5.5 5.5 0 0 0 5.5-5.5z" fill="#30a860" />
      <path d="M18 17h5.500a5.500 5.500 0 0 0-5.500-5.500z" fill="#2aa8d0" />
    </>
  ),
};

const Ic = ({ n, s = 24 }: { n: string; s?: number }) => (
  <svg width={s} height={s} viewBox="0 0 24 24" className="shrink-0">{ICONS[n]}</svg>
);

const Box = ({ c, n, s, children }: { c: string; n?: string; s?: number; children?: React.ReactNode }) => (
  <div className={"flex shrink-0 items-center justify-center self-stretch " + c}>
    {n ? <Ic n={n} s={s} /> : children}
  </div>
);
const Caret = ({ c, low }: { c: string; low?: boolean }) => (
  <div className={"flex shrink-0 justify-center self-stretch " + c + (low ? " items-end pb-[6px]" : " items-center")}>
    <div className="h-0 w-0 border-x-[3.5px] border-t-[4px] border-x-transparent border-t-[#111]" />
  </div>
);
const Sep = ({ c }: { c: string }) => (
  <div className={"flex shrink-0 items-center justify-center self-stretch " + c}>
    <div className="h-[26px] w-px bg-[#d6d6d6]" />
  </div>
);
const Grip = ({ c }: { c: string }) => (
  <div className={"flex shrink-0 items-center justify-center self-stretch " + c}>
    <div className="h-[26px] border-l-2 border-dotted border-[#aaa]" />
  </div>
);
const Combo = ({ c, label }: { c: string; label: string }) => (
  <div className={"flex h-[21px] shrink-0 items-center justify-between border border-[#a0a0a0] bg-white pl-[2px] pr-[7px] text-[12px] text-black " + c}>
    <span>{label}</span>
    <div className="h-0 w-0 border-x-[4px] border-t-[5px] border-x-transparent border-t-[#111]" />
  </div>
);

const MENU = [
  ["文件", "(F)", "w-[51px]"],
  ["编辑", "(E)", "w-[52px]"],
  ["视图", "(V)", "w-[53px]"],
  ["插入", "(S)", "w-[52px]"],
  ["格式", "(R)", "w-[54px]"],
  ["工具", "(T)", "w-[51px]"],
  ["装配", "(A)", "w-[53px]"],
  ["信息", "(I)", "w-[49px]"],
  ["分析", "(L)", "w-[59px]"],
  ["首选项", "(P)", "w-[64px]"],
  ["窗口", "(O)", "w-[55px]"],
  ["GC工具箱", "", "w-[65px]"],
  ["星空 V6.936F", "", "w-[87px]"],
  ["帮助", "(H)", "w-[49px]"],
];

const COL1A = ["tableStar", "millStar", "cubeStar", "millStar2"];
const COL1B = ["millSpark", "snakeW", "snakeC", "camCheck", "snakeD", "checkPlate", "checkMach"];
const COL1C = ["millArrow", "millMach", "millDoc", "machTable", "machArrow", "ring", "target"];
const COL2A = ["cardStar", "docsTree", "millTree", "cubeTree", "waveTree"];
const COL2B = ["millW", "millS", "millD2", "millF", "clip", "millABC", "millX", "swap"];

const LeftCaret = ({ c }: { c: string }) => (
  <div className={"flex shrink-0 items-center justify-center " + c}>
    <div className="mr-[8px] h-0 w-0 border-y-[3.5px] border-r-[4px] border-y-transparent border-r-[#111]" />
  </div>
);
const SideGrip = ({ c }: { c: string }) => (
  <div className={"flex shrink-0 items-center justify-center " + c}>
    <div className="w-[26px] border-t-2 border-dotted border-[#bbb]" />
  </div>
);

// ---- tree icons ----
const Status = ({ k }: { k?: string }) => (
  <svg width="14" height="18" viewBox="0 0 14 18" className="shrink-0">
    {k === "c" && <path d="M1 9l4 5l8-11" fill="none" stroke="#10b030" strokeWidth="3" />}
    {k === "b" && (
      <>
        <path d="M4 2h6l-1.500 10h-3z" fill="#f8e040" stroke="#c09810" strokeWidth=".8" />
        <circle cx="7" cy="15" r="1.800" fill="#f0d030" stroke="#c09810" strokeWidth=".6" />
      </>
    )}
    {k === "n" && (
      <>
        <circle cx="7" cy="9" r="5.500" fill="#fff" stroke="#d81818" strokeWidth="2.200" />
        <path d="M3 13l8-8" stroke="#d81818" strokeWidth="2.200" />
      </>
    )}
  </svg>
);
const OpIcon = ({ k }: { k?: string }) => {
  if (k === "fold")
    return (
      <svg width="15" height="16" viewBox="0 0 15 16" className="shrink-0">
        <path d="M.5 4.500L2 1h4l1 2h7l.500 12H.500z" fill="#f4e4a4" stroke="#a88e40" />
        <rect x="5" y="5" width="9" height="9" fill="#fff" />
        <path d="M12 6.500H8v2h3M8 8.500v3h4" fill="none" stroke="#1018e0" strokeWidth="1.300" />
      </svg>
    );
  return (
    <svg width="16" height="18" viewBox="0 0 16 18" className="ml-px shrink-0">
      {k === "plan" && (
        <>
          <path d="M1.500 2v14.500H15M4 14h11" fill="none" stroke="#222" strokeWidth="1" />
          <rect x="7" y="1" width="3" height="10" fill="#4a5ab8" />
          <path d="M10 5h5M10 8h4" stroke="#4a5ab8" />
        </>
      )}
      {k === "drill" && (
        <>
          <path d="M1.500 7v9.500H13M2 9l8 7M3 6l3 4" fill="none" stroke="#222" strokeWidth="1.200" />
          <path d="M7 9l6-8l2 2l-6 8z" fill="#eef" stroke="#4a5ab8" />
        </>
      )}
      {k === "face" && (
        <>
          <path d="M2 10l6-3l7 3v4l-6 3l-7-3z" fill="#b8b8b8" stroke="#444" />
          <path d="M6 9l3 2M9 8l3 2M2 10l7 3l6-3M9 13v4" fill="none" stroke="#444" strokeWidth=".8" />
          <rect x="2" y="0" width="3.500" height="9" fill="#4a5ab8" />
        </>
      )}
      {k === "hole" && (
        <>
          <rect x="7" y="1" width="3" height="7" fill="#4a5ab8" />
          <path d="M1 8h14M3 8v3h10V8M8 11v6M5 17h6M3 11v4M13 11v4" fill="none" stroke="#108898" strokeWidth="1.200" />
        </>
      )}
    </svg>
  );
};
const ToolMark = ({ k }: { k?: string }) => {
  if (k === "m")
    return (
      <svg width="8" height="16" viewBox="0 0 8 16">
        <rect width="8" height="16" fill="#3c4a9c" />
        <path d="M0 3l8-1M0 7l8-1M0 11l8-1M0 14l8-1" stroke="#c8d0f0" strokeWidth="1.200" />
      </svg>
    );
  if (k === "d")
    return (
      <svg width="8" height="16" viewBox="0 0 8 16">
        <path d="M0 0h8v10l-4 6l-4-6z" fill="#45506c" />
        <path d="M1 10l6-7M1 14l6-7" stroke="#e0e4ec" strokeWidth="1.300" />
      </svg>
    );
  return null;
};
const Mark = ({ k }: { k?: string }) => {
  if (k === "c")
    return (
      <svg width="14" height="14" viewBox="0 0 14 14">
        <path d="M1 7l4 5l8-10" fill="none" stroke="#10b030" strokeWidth="2.800" />
      </svg>
    );
  if (k === "x")
    return (
      <svg width="15" height="15" viewBox="0 0 15 15">
        <path d="M1.500 1.500l12 12M13.500 1.500l-12 12" stroke="#111" strokeWidth="2.600" />
      </svg>
    );
  if (k === "w")
    return (
      <svg width="15" height="15" viewBox="0 0 15 15">
        <path d="M1 13l7-7c-1-3 1-5 5-5l-2 3l3 2c-1 2-3 3-5 2l-6 7z" fill="#f0d050" stroke="#906818" strokeWidth=".7" />
      </svg>
    );
  return null;
};

const Guide = ({ k }: { k: string }) => {
  const narrow = k === "M" || k === "P" || k === "m";
  const end = k === "E" || k === "T";
  return (
    <div className={"relative h-full shrink-0 " + (end ? "w-[10px]" : narrow ? "w-[11px]" : "w-[19px]")}>
      {(k === "L" || k === "T" || k === "M" || k === "P") && <div className="absolute inset-y-0 left-0 border-l border-dotted border-[#888]" />}
      {(k === "E" || k === "m") && <div className="absolute left-0 top-0 h-1/2 border-l border-dotted border-[#888]" />}
      {(end || narrow) && <div className="absolute left-0 top-1/2 w-full border-t border-dotted border-[#888]" />}
      {narrow && (
        <div className="absolute -left-[5px] top-[5px] flex h-[11px] w-[11px] items-center justify-center border border-dotted border-[#bbb] bg-white">
          <div className="absolute h-px w-[7px] bg-[#222]" />
          {k === "P" && <div className="absolute h-[7px] w-px bg-[#222]" />}
        </div>
      )}
    </div>
  );
};

type Row = { g: string; st?: string; ic?: string; t: string; kind?: string; sw?: string; mk?: string; tool?: string };
const ROWS: Row[] = [
  { g: "", t: "NC_PROGRAM" },
  { g: "M", ic: "fold", t: "未用项" },
  { g: "LT", st: "n", ic: "plan", t: "G41-小孔精刀", kind: "off", mk: "x", tool: "---" },
  { g: "LE", st: "n", ic: "plan", t: "G41-孔精刀", kind: "off", mk: "x", tool: "---" },
  { g: "m", st: "b", ic: "fold", t: "PROGRAM" },
  { g: "_P", st: "c", ic: "fold", t: "1" },
  { g: "_M", st: "b", ic: "fold", t: "2" },
  { g: "_LM", st: "b", ic: "fold", t: "ELGA-80FLB-22" },
  { g: "_LLT", st: "c", ic: "face", t: "面铣_COPY_1", kind: "new", sw: "m", mk: "c", tool: "D63-C" },
  { g: "_LLE", st: "b", ic: "face", t: "面铣_COPY_1_COPY_2", kind: "sel", mk: "w", tool: "D63-C" },
  { g: "_LM", st: "c", ic: "fold", t: "B02" },
  { g: "_LLE", st: "c", ic: "hole", t: "HOLE_MILLING_COPY", kind: "new", sw: "m", mk: "c", tool: "D16-C" },
  { g: "_LM", st: "c", ic: "fold", t: "B03" },
  { g: "_LLE", st: "c", ic: "plan", t: "平面轮廓铣", kind: "new", sw: "m", mk: "c", tool: "D08" },
  { g: "_LM", st: "c", ic: "fold", t: "B04" },
  { g: "_LLE", st: "c", ic: "drill", t: "DRILLING_1_COPY_1", kind: "new", sw: "m", mk: "c", tool: "ZXZ-8MM" },
  { g: "_LM", st: "c", ic: "fold", t: "B05" },
  { g: "_LLT", st: "c", ic: "plan", t: "平面铣_COPY_2", mk: "c", tool: "ZXZ-8MM" },
  { g: "_LLT", st: "c", ic: "plan", t: "平面铣_COPY_2_COPY", mk: "c", tool: "ZXZ-8MM" },
  { g: "_LLE", st: "c", ic: "plan", t: "平面铣_COPY_2_COPY_COPY", mk: "c", tool: "ZXZ-8MM" },
  { g: "_LM", st: "c", ic: "fold", t: "B06" },
  { g: "_LLE", st: "c", ic: "drill", t: "DRILLING_1_COPY_1_COPY", kind: "new", sw: "d", mk: "c", tool: "ZT-D5.0" },
  { g: "_LM", st: "c", ic: "fold", t: "B07" },
  { g: "_LLE", st: "c", ic: "face", t: "面铣_COPY_1_COPY", kind: "new", sw: "m", mk: "c", tool: "D63-J" },
  { g: "_LM", st: "c", ic: "fold", t: "G41-D04-70.1" },
  { g: "_LLE", st: "c", ic: "plan", t: "平面铣_COPY_2_COPY_COPY_1", kind: "new", sw: "m", mk: "c", tool: "D12-J" },
  { g: "_LM", st: "c", ic: "fold", t: "B09" },
];

const TreeRow = ({ r }: { r: Row }) => {
  const sel = r.kind === "sel";
  const color = r.kind === "off" ? "text-[#8db8ab]" : r.kind === "new" ? "text-[#7a36d2]" : "text-[#111]";
  const leaf = r.g.endsWith("E") || r.g.endsWith("T");
  const textPad = !r.st && r.ic === "fold" ? " pl-[1px]" : r.ic === "fold" ? " pl-[4px]" : " pl-[3px]";
  return (
    <div className={"grid h-[22px] shrink-0 grid-cols-[381px_23px_24px_90px] border-b border-[#e8e8e8] " + (leaf ? "bg-[#fafafa]" : "bg-white")}>
      <div className={"flex h-[21px] items-center border-r border-[#e4e4e4] " + (r.g ? "pl-[11px]" : "pl-[1px]")}>
        {r.g.split("").map((k, i) =>
          k === "_" ? <div key={i} className="w-[19px] shrink-0" /> : <Guide key={i} k={k} />
        )}
        {r.st && <Status k={r.st} />}
        {r.ic && <OpIcon k={r.ic} />}
        <div className={"flex h-full flex-1 items-center whitespace-nowrap " + color + textPad + (sel ? " border-y border-dotted border-[#f0a040] bg-[#3399ff] text-white" : "")}>
          {r.t}
        </div>
      </div>
      <div className={"flex h-[21px] items-center justify-center border-r border-[#e4e4e4] " + (sel ? "bg-[#3399ff]" : "")}>
        <ToolMark k={r.sw} />
      </div>
      <div className={"flex h-[21px] items-center justify-center border-r border-[#e4e4e4] " + (sel ? "bg-[#3399ff]" : "")}>
        <Mark k={r.mk} />
      </div>
      <div className={"flex h-[21px] items-center whitespace-nowrap pl-[5px] " + (sel ? "bg-[#3399ff] text-white" : color)}>
        {r.tool}
      </div>
    </div>
  );
};

// ---- 3D view: coordinates below are read off a 1568x1568 crop of the view ----
const P = (p: React.SVGProps<SVGPathElement>) => <path vectorEffect="non-scaling-stroke" {...p} />;
const GOLD = "#a89660";
const px = (x: number) => 700 + x * 0.5102;
const py = (y: number) => 200 + y * 0.3801;
const hole = (x: number, y: number) => (
  <g key={x + "-" + y}>
    <ellipse cx={x} cy={y} rx="23" ry="23" fill="#222" vectorEffect="non-scaling-stroke" />
    <ellipse cx={x} cy={y} rx="20" ry="19" fill="#4a5052" stroke={GOLD} strokeWidth="1.600" vectorEffect="non-scaling-stroke" />
    <ellipse cx={x} cy={y} rx="13" ry="12" fill="#444a4c" stroke="#222" strokeWidth="1" vectorEffect="non-scaling-stroke" />
  </g>
);
const stripes = (x1: number, x2: number, y: number) => (
  <g>
    <rect x={x1} y={y} width={x2 - x1} height="48" fill="#f8d8d8" />
    <rect x={x1} y={y + 8} width={x2 - x1} height="8" fill="#ffc800" />
    <rect x={x1} y={y + 24} width={x2 - x1} height="8" fill="#ffc800" />
    <rect x={x1} y={y + 40} width={x2 - x1} height="8" fill="#ffc800" />
  </g>
);

const Scene = () => (
  <svg viewBox="634 157 1087 639" className="block h-full w-full">
    <defs>
      <linearGradient id="cut" x1="0" y1="0" x2="1" y2="0">
        <stop offset="0" stopColor="#6a7476" />
        <stop offset=".45" stopColor="#3e4548" />
        <stop offset="1" stopColor="#68747a" />
      </linearGradient>
      <linearGradient id="lc" x1="0" y1="0" x2="1" y2="0">
        <stop offset="0" stopColor="#434a4c" />
        <stop offset=".35" stopColor="#7a888c" />
        <stop offset="1" stopColor="#434a4c" />
      </linearGradient>
      <linearGradient id="rc" x1="0" y1="0" x2="1" y2="0">
        <stop offset="0" stopColor="#434a4c" />
        <stop offset="1" stopColor="#7f9094" />
      </linearGradient>
      <linearGradient id="lite" x1="0" y1="0" x2="1" y2="0">
        <stop offset="0" stopColor="#cfe3ea" />
        <stop offset="1" stopColor="#6e7c80" />
      </linearGradient>
    </defs>
    <g transform="translate(700 200) scale(0.5102 0.3801)">
      {/* body */}
      <P d="M360 1150L382 1395Q390 1440 440 1448L885 1448Q930 1440 936 1395L960 1150Z" fill="#42494b" stroke={GOLD} strokeWidth="1.800" />
      <P d="M360 1150L382 1395Q390 1440 440 1448L472 1150Z" fill="url(#lc)" stroke={GOLD} strokeWidth="1.800" />
      <P d="M915 1150L885 1448Q930 1440 936 1395L960 1150Z" fill="url(#rc)" stroke={GOLD} strokeWidth="1.800" />
      {/* flange sides */}
      <P d="M300 470L307 425L358 1020L420 1072L1025 1072L1072 1020L1065 1090Q1058 1142 1015 1150L412 1150Q360 1140 352 1090Z" fill="#42494b" stroke={GOLD} strokeWidth="1.800" />
      <P d="M358 1020Q375 1065 420 1072L412 1150Q360 1140 352 1090Z" fill="url(#lc)" stroke={GOLD} strokeWidth="1.800" />
      <P d="M1025 1072Q1070 1065 1072 1020L1065 1090Q1058 1142 1015 1150Z" fill="url(#rc)" stroke={GOLD} strokeWidth="1.800" />
      {/* top face */}
      <P d="M345 373L965 373Q1010 378 1017 425L1072 1020Q1070 1065 1025 1072L415 1072Q375 1065 358 1020L307 425Q308 380 345 373Z" fill="#cfe3ea" stroke={GOLD} strokeWidth="1.800" />
      <P d="M1017 425Q1010 378 965 373L345 373Q308 380 307 425L358 1020Q375 1065 415 1072L1025 1072" fill="none" stroke="#ec948c" strokeWidth="2" />
      {/* big bore */}
      <ellipse cx="690" cy="720" rx="315" ry="308" fill="#3f4648" stroke={GOLD} strokeWidth="2.200" vectorEffect="non-scaling-stroke" />
      <ellipse cx="683" cy="734" rx="310" ry="294" fill="#cfe3ea" stroke={GOLD} strokeWidth="2.200" vectorEffect="non-scaling-stroke" />
      {/* cut outs */}
      <P d="M520 622Q665 482 825 622L875 597Q930 575 945 640Q945 665 925 672L875 697L885 790L850 885L798 885L808 790L835 755Q840 715 812 715L780 685Q650 590 515 715L485 718L480 690L425 665Q395 630 415 597Q440 582 465 595Z" fill="url(#cut)" stroke={GOLD} strokeWidth="2.200" />
      <P d="M505 790Q650 666 808 790L798 885L485 885Z" fill="url(#cut)" stroke={GOLD} strokeWidth="2.200" />
      <P d="M500 795L440 820Q420 850 440 885L488 885Z" fill="#4a5254" stroke={GOLD} strokeWidth="2.200" />
      <P d="M885 795L940 825Q975 860 960 885L860 885Z" fill="url(#cut)" stroke={GOLD} strokeWidth="2.200" />
      <P d="M485 718L515 715L520 782Q495 775 485 718Z" fill="#cfe3ea" stroke={GOLD} strokeWidth="1.800" />
      <P d="M780 685L812 715Q840 715 835 755L808 790L788 778Z" fill="url(#lite)" stroke={GOLD} strokeWidth="1.800" />
      <P d="M868 730L885 735L878 880L852 875Z" fill="#566062" stroke={GOLD} strokeWidth="1.200" />
      <P d="M465 595L455 680M825 622L808 790M875 597L855 875M935 825L930 885" fill="none" stroke={GOLD} strokeWidth="1.800" />
      <P d="M620 930Q700 960 785 930Z" fill="#3f4648" stroke={GOLD} strokeWidth="1.800" />
      {[[380, 443], [945, 443], [432, 998], [997, 998]].map(([x, y]) => hole(x, y))}
      {/* pink ticks on the face */}
      <P d="M335 720L347 703M1030 738L1042 722M702 1052L718 1065M1038 1058L1058 1050M660 372L675 385M1000 395L1005 412" fill="none" stroke="#ec948c" strokeWidth="1.400" />
      <P d="M374 1018A10 10 0 1 1 354 1018A10 10 0 1 1 374 1018Z" fill="none" stroke="#ec948c" strokeWidth="1.400" />
      {/* lines of the body */}
      <P d="M410 1150L382 1390M420 1072L412 1150M1025 1072L1015 1150" fill="none" stroke={GOLD} strokeWidth="1.800" />
      {/* tool path */}
      <P d="M38 467L1308 467L1305 516L45 516Z" fill="#00ffff" />
      {stripes(1307, 1421, 468)}
      <P d="M78 882L1347 884L1345 930L72 930Z" fill="#00ffff" />
      {stripes(1346, 1459, 883)}
      <P d="M38 467L32 515L72 930L78 882Z" fill="#00ff00" />
      <P d="M160 482H300M1035 482H1200M80 888H240M295 922H600M620 906H785M1180 925H1340" fill="none" stroke="#18c4cc" strokeWidth="1" />
      <P d="M1465 50L1430 400" fill="none" stroke="#f01818" strokeWidth="3.200" strokeDasharray="9 4" />
      <P d="M1431 395L1421 490" fill="none" stroke="#1020e8" strokeWidth="3.200" strokeDasharray="9 4" />
      <P d="M1502 480L1457 900" fill="none" stroke="#1020e8" strokeWidth="3.200" strokeDasharray="9 4" />
      {/* hand drawn loop */}
      <P d="M1445 553Q1428 545 1445 530L1490 528Q1500 535 1498 550L1498 610Q1490 650 1480 670L1450 725L1440 755L1390 800L1340 802Q1310 790 1298 755L1297 720Q1305 680 1325 655L1400 565L1420 553L1440 545" fill="none" stroke="#ff2010" strokeWidth="2.600" />
      {/* WCS axes */}
      <P d="M645 260L657 370" fill="none" stroke="#1860e8" strokeWidth="2.500" />
      <P d="M662 280L656 360" fill="none" stroke="#207030" strokeWidth="2.500" />
      <P d="M648 305H668V330H648Z" fill="#e01818" />
      <P d="M555 372H650" fill="none" stroke="#d01818" strokeWidth="1.500" />
      <P d="M555 372L605 362V382Z" fill="#e01818" />
      {/* MCS axes */}
      <P d="M637 1210H835" fill="none" stroke="#e8a0a0" strokeWidth="1.500" />
      <P d="M800 1202L840 1210L800 1218Z" fill="#f0b0b0" />
      <P d="M637 1210L653 1060" fill="none" stroke="#6078c8" strokeWidth="1.500" />
      <P d="M645 1066L654 1028L661 1066Z" fill="#4060b0" />
      <P d="M637 1210L620 1040" fill="none" stroke="#c0e8c0" strokeWidth="1.500" />
      <P d="M616 1045L621 1015L626 1045Z" fill="#c0e8c0" />
      <P d="M628 1050A6 7 0 1 1 615 1050A6 7 0 1 1 628 1050Z" fill="#304030" />
    </g>
    <g fontFamily="Noto Sans" fontSize="12">
      <text x={px(632)} y={py(268)} fill="#2a9a4a">YC</text>
      <text x={px(655)} y={py(260)} fill="#2a5ae8">ZC</text>
      <text x={px(648)} y={py(282)} fontSize="9" fill="#e02020">Z</text>
      <text x={px(543)} y={py(358)} fill="#d03030">XC</text>
      <text x={px(622)} y={py(1012)} fill="#2a9a4a">YM</text>
      <text x={px(622)} y={py(1012)} fill="#2a5ae8">ZM</text>
      <text x={px(808)} y={py(1245)} fill="#c83030">XM</text>
    </g>
  </svg>
);

export default function App() {
  return (
    <div className={"relative flex h-[796px] w-[1721px] flex-col overflow-hidden bg-[#f5f5f5] text-[#111] " + FONT}>
      {/* title */}
      <div className="flex h-[28px] shrink-0 items-center">
        <span className="w-[38px] pl-px font-['Liberation_Sans',sans-serif] text-[22px] font-bold tracking-[0.5px] text-[#9db0bb]">NX</span>
        <div className="h-[20px] w-px bg-[#d8d8d8]" />
        <span className="ml-[5px] text-[14.2px]">NX 10 - 加工 - [ELGA-80法兰板-M6.prt （修改的）]</span>
      </div>

      {/* menu */}
      <div className="flex h-[28px] shrink-0 items-center bg-[#c8d7d6] text-[12.5px] text-[#222]">
        <div className="flex w-[26px] shrink-0 items-center justify-center gap-px">
          <div className="h-[18px] border-l-2 border-dotted border-[#888]" />
          <Ic n="millT" s={14} />
        </div>
        {MENU.map(([a, b, w]) => (
          <div key={a} className={"shrink-0 whitespace-nowrap " + w}>
            {a}
            {b && <span className="underline">{b}</span>}
          </div>
        ))}
        <div className="ml-[1px] h-[22px] w-px bg-[#b8c8c7]" />
        <div className="ml-[10px] whitespace-nowrap">模圣软件</div>
      </div>

      {/* toolbar 1 */}
      <div className="flex h-[34px] w-[1299px] shrink-0 items-center border-b border-[#dedede] bg-[#f0f0f0] pb-px text-[12.5px]">
        <Grip c="w-[6px]" />
        <Box c="w-[26px]" n="earth" s={25} />
        <Box c="w-[30px]">启动</Box>
        <Caret c="w-[8px]" />
        <Box c="w-[32px]" n="doc" />
        <Box c="w-[32px]" n="folder" />
        <Box c="w-[28px]" n="save" s={22} />
        <Sep c="w-[8px]" />
        <Box c="w-[30px]" n="xmark" s={22} />
        <Sep c="w-[8px]" />
        <Box c="w-[30px]" n="undo" />
        <Caret c="w-[11px]" />
        <Sep c="w-[8px]" />
        <Box c="w-[31px]" n="camCheck" />
        <Caret c="w-[10px]" />
        <Sep c="w-[7px]" />
        <Box c="w-[30px]" n="mirror" />
        <Box c="w-[31px]" n="squares" />
        <Caret c="w-[12px]" low />
        <Sep c="w-[6px]" />
        <Grip c="w-[4px]" />
        <Box c="w-[28px]" n="box1" />
        <Box c="w-[34px]" n="box2" />
        <Caret c="w-[12px]" low />
        <Sep c="w-[4px]" />
        <Grip c="w-[8px]" />
        <div className="flex h-[21px] w-[54px] shrink-0 items-center justify-between border border-[#a0a0a0] bg-white pl-[3px] pr-[6px] text-[14px]">
          <span>100</span>
          <div className="h-0 w-0 border-x-[4px] border-t-[5px] border-x-transparent border-t-[#111]" />
        </div>
        <Box c="w-[36px]" n="stack" />
        <Caret c="w-[7px]" />
        <Sep c="w-[10px]" />
        <Box c="w-[28px]" n="paletteD" />
        <Sep c="w-[6px]" />
        <Box c="w-[31px]" n="flagD" />
        <Caret c="w-[13px]" />
        <Sep c="w-[4px]" />
        <Box c="w-[33px]" n="ruler" />
        <Caret c="w-[10px]" low />
        <Sep c="w-[6px]" />
        <Grip c="w-[6px]" />
        <Box c="w-[31px]" n="snakeL" />
        <Box c="w-[31px]" n="snakeC" />
        <Box c="w-[30px] border border-[#a5c0bc] bg-[#c8d7d6]" n="activeA" />
        <Box c="w-[31px] border border-[#a5c0bc] bg-[#c8d7d6]" n="activeB" />
        <Box c="w-[32px]" n="circlePt" />
        <Box c="w-[31px]" n="sCurve" />
        <Box c="w-[31px]" n="sqPalette" />
        <Box c="w-[28px]" n="treePalette" />
        <Box c="w-[33px]" n="millPalette" />
        <Caret c="w-[12px]" low />
        <Sep c="w-[4px]" />
        <Grip c="w-[6px]" />
        <Box c="w-[30px]" n="rainbow" />
        <Caret c="w-[16px]" />
        <Box c="w-[26px]" n="chain" />
        <Box c="w-[36px]" n="plus" />
        <Caret c="w-[9px]" />
        <Box c="w-[32px]" n="lift" />
        <Caret c="w-[12px]" />
        <Box c="w-[32px]" n="cylPlate" />
        <Box c="w-[24px]" n="blueBox" />
        <Box c="w-[42px]" n="wireBox" />
        <Caret c="w-[8px]" />
        <Caret c="w-[8px]" low />
      </div>

      {/* toolbar 2 */}
      <div className="flex h-[33px] w-[815px] shrink-0 items-center border-b border-[#dedede] bg-[#f0f0f0] text-[12.5px]">
        <Grip c="w-[4px]" />
        {["line", "arc", "rect", "poly", "sketchDots"].map((n) => (
          <Box key={n} c="w-[31px]" n={n} />
        ))}
        <Box c="w-[31px]">
          <span className="font-['Liberation_Serif',serif] text-[26px] font-bold leading-none text-[#333]">A</span>
        </Box>
        {["heart", "patch", "patch2", "curve1", "cylLine", "curves", "arch", "plane", "crossBlue", "sheets", "fold", "mesh", "cubeSheets", "cylA", "cylB"].map((n) => (
          <Box key={n} c="w-[31px]" n={n} />
        ))}
        <Caret c="w-[11px]" low />
        <Sep c="w-[3px]" />
        <Grip c="w-[7px]" />
        <Box c="w-[35px]" n="trim1" />
        <Box c="w-[30px]" n="trim2" />
        <Box c="w-[31px] border border-[#f5c860] bg-[#fdf3d8]" n="trim3" />
        <Box c="w-[29px]" n="trim4" />
        <Caret c="w-[14px]" low />
      </div>

      {/* selection bar */}
      <div className="flex h-[32px] shrink-0 items-center pb-px pl-[2px] text-[13px]">
        <Combo c="w-[146px]" label="没有选择过滤器" />
        <Combo c="ml-[8px] w-[156px]" label="整个装配" />
        <Box c="ml-px w-[28px]" n="grayCube" s={18} />
        <Sep c="w-[2px]" />
        <Box c="w-[25px]" n="grayFilter" s={18} />
        <Box c="w-[22px]" n="no" s={20} />
        <Box c="w-[24px]" n="orangeCube" s={20} />
        <Box c="w-[22px]" n="orangePatch" s={18} />
        <Box c="w-[23px]" n="cubeA" s={20} />
        <Box c="w-[23px]" n="cubeB" s={20} />
        <Box c="w-[24px]" n="sRed" s={20} />
        <Box c="w-[21px]" n="plusses" s={18} />
        <Box c="w-[20px]" n="filterBox" s={18} />
        <Caret c="w-[14px]" />
        <Box c="w-[22px]" n="undoT" s={20} />
        <Box c="w-[24px]" n="toolsG" s={20} />
        <Sep c="w-[2px]" />
        <Box c="w-[27px]" n="dashRect" s={18} />
        <Caret c="w-[12px]" />
        <Sep c="w-[2px]" />
        <Box c="w-[26px]" n="grayBox" s={20} />
        <Box c="w-[22px]" n="blueCube" s={20} />
      </div>

      {/* main */}
      <div className="flex min-h-0 flex-1 border-t-2 border-[#8f8f8f] bg-[#f0f0f0]">
        {/* left rail */}
        <div className="flex w-[34px] shrink-0 flex-col">
          <div className="flex h-[166px] w-[28px] shrink-0 flex-col items-center border-b-2 border-r-2 border-[#8a8a8a] bg-[#d9d9d9]">
            <Box c="h-[26px] w-full" n="gear" s={16} />
            <Box c="mt-[25px] h-[25px] w-full" n="asm" s={25} />
            <Box c="mt-[17px] h-[25px] w-full" n="mirrorT" s={25} />
            <Box c="mt-[18px] h-[25px] w-full" n="cylT" s={25} />
          </div>
          <div className="flex h-[45px] w-[28px] shrink-0 items-center justify-center">
            <Ic n="millT" s={25} />
          </div>
          <div className="flex min-h-0 w-[28px] flex-1 flex-col items-center overflow-hidden border-r-2 border-t-2 border-[#8a8a8a] bg-[#d9d9d9]">
            <Box c="h-[36px] w-full" n="table" s={25} />
            <Box c="h-[48px] w-full" n="cam" s={25} />
            <Box c="h-[36px] w-full" n="books" s={25} />
            <Box c="h-[70px] w-full" n="info" s={26} />
            <Box c="h-[40px] w-full" n="docEarth" s={25} />
            <Box c="h-[68px] w-full" n="clock" s={24} />
            <Box c="h-[16px] w-full" n="rainbowT" s={25} />
            <Box c="h-[68px] w-full" n="wand" s={24} />
            <Box c="h-[16px] w-full" n="toolsT" s={25} />
            <Box c="h-[54px] w-full" n="doc" s={20} />
          </div>
        </div>

        {/* navigator */}
        <div className="flex w-[531px] shrink-0 flex-col pl-px text-[13.5px]">
          <div className="flex h-[30px] shrink-0 items-center justify-between pl-[3px] pr-[15px] pt-[2px]">
            <span>工序导航器 - 程序顺序</span>
            <div className="mt-[2px] h-[12px] w-[13px] border border-t-2 border-[#222]" />
          </div>
          <div className="relative flex min-h-0 w-[519px] flex-1 flex-col overflow-hidden border-l border-r border-t border-[#d4d4d4] bg-white">
            <div className="grid h-[23px] shrink-0 grid-cols-[381px_23px_24px_90px] border-b-2 border-[#cfcfcf] bg-[#f0f0f0]">
              <div className="flex items-center border-r border-[#dcdcdc] pl-[6px]">名称</div>
              <div className="flex items-center justify-center border-r border-[#dcdcdc]">换</div>
              <div className="flex items-center justify-center border-r border-[#dcdcdc]">刀</div>
              <div className="flex items-center pl-[6px]">刀具</div>
            </div>
            {ROWS.map((r, i) => (
              <TreeRow key={i} r={r} />
            ))}
            <div className="absolute bottom-0 left-[380px] top-[23px] w-px bg-black" />
          </div>
        </div>

        {/* side toolbars */}
        <div className="flex w-[69px] shrink-0 border-l border-[#a8a8a8]">
          <div className="flex w-[33px] shrink-0 flex-col">
            <SideGrip c="h-[7px]" />
            {COL1A.map((n) => (
              <Box key={n} c="h-[31px] w-full" n={n} s={25} />
            ))}
            <LeftCaret c="h-[14px]" />
            <div className="h-px shrink-0 bg-[#dcdcdc]" />
            <SideGrip c="h-[6px]" />
            {COL1B.map((n) => (
              <Box key={n} c="h-[31.5px] w-full" n={n} s={25} />
            ))}
            <div className="mx-[4px] my-[1px] h-px shrink-0 bg-[#d0d0d0]" />
            {COL1C.map((n) => (
              <Box key={n} c="h-[31.5px] w-full" n={n} s={25} />
            ))}
            <LeftCaret c="h-[18px]" />
            <div className="h-px shrink-0 bg-[#dcdcdc]" />
          </div>
          <div className="flex w-[36px] shrink-0 flex-col border-l border-[#e4e4e4]">
            <SideGrip c="h-[8px]" />
            {COL2A.map((n) => (
              <Box key={n} c={"h-[31px] w-full" + (n === "docsTree" ? " border border-[#a5c0bc] bg-[#c8d7d6]" : "")} n={n} s={25} />
            ))}
            <LeftCaret c="h-[29px]" />
            <div className="h-px shrink-0 bg-[#dcdcdc]" />
            <SideGrip c="h-[10px]" />
            {COL2B.map((n) => (
              <Box key={n} c="h-[31.5px] w-full" n={n} s={25} />
            ))}
            <LeftCaret c="h-[22px]" />
            <div className="h-px shrink-0 bg-[#dcdcdc]" />
            <SideGrip c="h-[7px]" />
            <Box c="h-[31px] w-full" n="cubePie" s={25} />
            <LeftCaret c="h-[22px]" />
            <div className="h-px shrink-0 bg-[#dcdcdc]" />
          </div>
        </div>

        {/* graphics window */}
        <div className="relative min-w-0 flex-1 bg-[#222429]">
          <Scene />
          <div className="absolute bottom-[4px] right-[4px] whitespace-nowrap font-['Liberation_Mono','Noto_Sans_CJK_SC',monospace] text-[14px] text-[#d4d4d4]">
            UG爱好者论坛@123456ugii
          </div>
        </div>
      </div>

      {/* red note around the two rows */}
      <div className="absolute left-[93px] top-[382px] h-[51px] w-[552px] rounded-[3px] border-[3px] border-[#ff1c10]" />

      {/* upload toast */}
      <div className="absolute right-0 top-0 flex h-[37px] w-[108px] overflow-hidden rounded-bl-[8px] border-b-2 border-[#2196f3] bg-[#d3ecfd]">
        <div className="flex w-[41px] shrink-0 items-center justify-center rounded-r-[4px] bg-[#1890ff]">
          <svg width="20" height="26" viewBox="0 0 20 26">
            <path d="M10 25V3M3 10l7-7l7 7" fill="none" stroke="#fff" strokeWidth="2" />
          </svg>
        </div>
        <div className="flex-1 whitespace-nowrap pl-[26px] pt-[7px] text-[14px] text-[#2196f3]">上传中...</div>
      </div>
    </div>
  );
}
